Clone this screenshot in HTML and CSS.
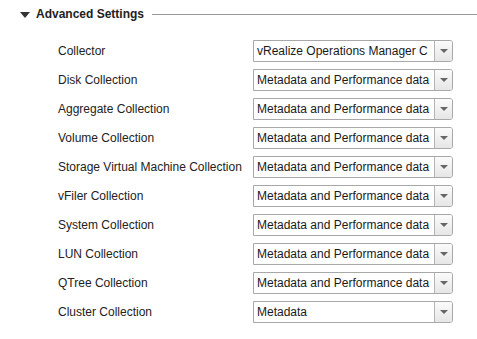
FILE: index.html
```html
<!DOCTYPE html>
<html lang="en">
<head>
    <meta charset="UTF-8">
    <title>Advanced Settings</title>
    <link rel="stylesheet" href="styles.css">
</head>
<body>
    <div class="section-header">
        <span class="toggle"></span>
        <span class="section-title">Advanced Settings</span>
        <span class="section-rule"></span>
    </div>

    <div class="settings">
        <label>Collector</label>
        <div class="combo"><span class="combo-value">vRealize Operations Manager C</span><span class="combo-btn"><i></i></span></div>

        <label>Disk Collection</label>
        <div class="combo"><span class="combo-value">Metadata and Performance data</span><span class="combo-btn"><i></i></span></div>

        <label>Aggregate Collection</label>
        <div class="combo"><span class="combo-value">Metadata and Performance data</span><span class="combo-btn"><i></i></span></div>

        <label>Volume Collection</label>
        <div class="combo"><span class="combo-value">Metadata and Performance data</span><span class="combo-btn"><i></i></span></div>

        <label>Storage Virtual Machine Collection</label>
        <div class="combo"><span class="combo-value">Metadata and Performance data</span><span class="combo-btn"><i></i></span></div>

        <label>vFiler Collection</label>
        <div class="combo"><span class="combo-value">Metadata and Performance data</span><span class="combo-btn"><i></i></span></div>

        <label>System Collection</label>
        <div class="combo"><span class="combo-value">Metadata and Performance data</span><span class="combo-btn"><i></i></span></div>

        <label>LUN Collection</label>
        <div class="combo"><span class="combo-value">Metadata and Performance data</span><span class="combo-btn"><i></i></span></div>

        <label>QTree Collection</label>
        <div class="combo"><span class="combo-value">Metadata and Performance data</span><span class="combo-btn"><i></i></span></div>

        <label>Cluster Collection</label>
        <div class="combo"><span class="combo-value">Metadata</span><span class="combo-btn"><i></i></span></div>
    </div>
</body>
</html>
```

FILE: styles.css
```css
body {
    margin: 0;
    font-family: "Liberation Sans", Arial, sans-serif;
    font-size: 12px;
    color: #222;
    background: #fff;
}

.section-header {
    display: flex;
    align-items: center;
    height: 28px;
    padding-left: 20px;
}

.toggle {
    width: 0;
    height: 0;
    border-left: 5px solid transparent;
    border-right: 5px solid transparent;
    border-top: 6px solid #333;
    margin-right: 6px;
    margin-top: 1px;
}

.section-title {
    font-size: 12px;
    font-weight: bold;
    color: #222;
}

.section-rule {
    flex: 1;
    height: 1px;
    background: #999;
    margin-left: 8px;
    margin-top: 1px;
}

.settings {
    display: grid;
    grid-template-columns: 195px 200px;
    grid-auto-rows: 29px;
    align-items: center;
    padding-left: 58px;
    margin-top: 8px;
}

.settings label {
    color: #222;
}

.combo {
    display: flex;
    height: 22px;
    box-sizing: border-box;
    border: 1px solid #a8a8a8;
    border-radius: 0 3px 3px 0;
    background: #fff;
}

.combo-value {
    flex: 1;
    padding-left: 3px;
    line-height: 20px;
    white-space: nowrap;
    overflow: hidden;
    color: #1a1a1a;
}

.combo-btn {
    width: 17px;
    border-left: 1px solid #b5b5b5;
    background: linear-gradient(#fbfbfb, #e6e6e6);
    border-radius: 0 2px 2px 0;
    display: flex;
    align-items: center;
    justify-content: center;
}

.combo-btn i {
    width: 0;
    height: 0;
    border-left: 4px solid transparent;
    border-right: 4px solid transparent;
    border-top: 4px solid #666;
}
```
